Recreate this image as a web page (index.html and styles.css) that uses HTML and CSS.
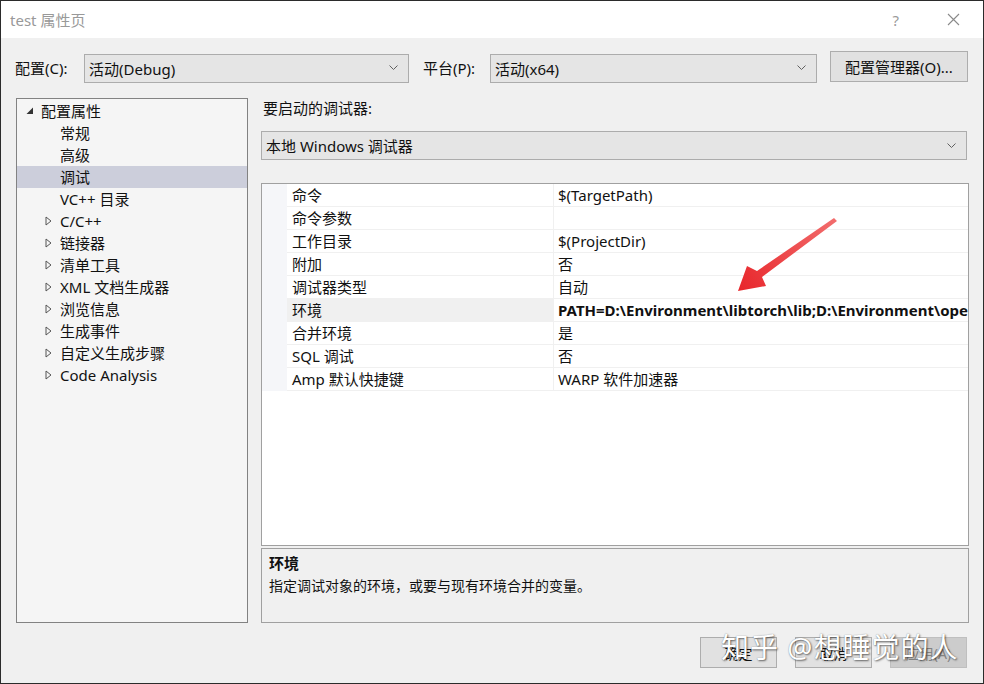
FILE: index.html
```html
<!DOCTYPE html>
<html>
  <head>
    <meta charset="utf-8">
    <title>test 属性页</title>
    <link rel="stylesheet" href="styles.css">
  </head>
  <body>
    <div class="window">
      <div class="titlebar">
        <span class="title">test 属性页</span>
        <span class="help">?</span>
        <svg class="close" width="13" height="13" viewBox="0 0 13 13"><path d="M1 1L12 12M12 1L1 12" stroke="#8a8a8a" stroke-width="1.1"/></svg>
      </div>

      <div class="toolbar">
        <span class="lbl lbl-config">配置(C):</span>
        <div class="combo combo-config">
          <span>活动(Debug)</span>
          <svg class="chev" width="9" height="6" viewBox="0 0 9 6"><path d="M0.5 0.5L4.5 4.5L8.5 0.5" fill="none" stroke="#606060"/></svg>
        </div>
        <span class="lbl lbl-platform">平台(P):</span>
        <div class="combo combo-platform">
          <span>活动(x64)</span>
          <svg class="chev" width="9" height="6" viewBox="0 0 9 6"><path d="M0.5 0.5L4.5 4.5L8.5 0.5" fill="none" stroke="#606060"/></svg>
        </div>
        <div class="btn btn-manager">配置管理器(O)...</div>
      </div>

      <div class="content">
        <div class="tree">
          <div class="node root">
            <svg class="tri" width="8" height="8" viewBox="0 0 8 8"><path d="M7 0.5V7H0.5Z" fill="#333"/></svg>
            <span>配置属性</span>
          </div>
          <div class="node leaf">常规</div>
          <div class="node leaf">高级</div>
          <div class="node leaf selected">调试</div>
          <div class="node leaf">VC++ 目录</div>
          <div class="node branch"><svg class="tri" width="8" height="10" viewBox="0 0 8 10"><path d="M1 1L6 5L1 9Z" fill="none" stroke="#555"/></svg><span>C/C++</span></div>
          <div class="node branch"><svg class="tri" width="8" height="10" viewBox="0 0 8 10"><path d="M1 1L6 5L1 9Z" fill="none" stroke="#555"/></svg><span>链接器</span></div>
          <div class="node branch"><svg class="tri" width="8" height="10" viewBox="0 0 8 10"><path d="M1 1L6 5L1 9Z" fill="none" stroke="#555"/></svg><span>清单工具</span></div>
          <div class="node branch"><svg class="tri" width="8" height="10" viewBox="0 0 8 10"><path d="M1 1L6 5L1 9Z" fill="none" stroke="#555"/></svg><span>XML 文档生成器</span></div>
          <div class="node branch"><svg class="tri" width="8" height="10" viewBox="0 0 8 10"><path d="M1 1L6 5L1 9Z" fill="none" stroke="#555"/></svg><span>浏览信息</span></div>
          <div class="node branch"><svg class="tri" width="8" height="10" viewBox="0 0 8 10"><path d="M1 1L6 5L1 9Z" fill="none" stroke="#555"/></svg><span>生成事件</span></div>
          <div class="node branch"><svg class="tri" width="8" height="10" viewBox="0 0 8 10"><path d="M1 1L6 5L1 9Z" fill="none" stroke="#555"/></svg><span>自定义生成步骤</span></div>
          <div class="node branch"><svg class="tri" width="8" height="10" viewBox="0 0 8 10"><path d="M1 1L6 5L1 9Z" fill="none" stroke="#555"/></svg><span>Code Analysis</span></div>
        </div>

        <div class="pane">
          <div class="pane-label">要启动的调试器:</div>
          <div class="combo combo-debugger">
            <span>本地 Windows 调试器</span>
            <svg class="chev" width="9" height="6" viewBox="0 0 9 6"><path d="M0.5 0.5L4.5 4.5L8.5 0.5" fill="none" stroke="#606060"/></svg>
          </div>

          <div class="grid">
            <div class="row"><div class="gutter"></div><div class="name">命令</div><div class="value">$(TargetPath)</div></div>
            <div class="row"><div class="gutter"></div><div class="name">命令参数</div><div class="value"></div></div>
            <div class="row"><div class="gutter"></div><div class="name">工作目录</div><div class="value">$(ProjectDir)</div></div>
            <div class="row"><div class="gutter"></div><div class="name">附加</div><div class="value">否</div></div>
            <div class="row"><div class="gutter"></div><div class="name">调试器类型</div><div class="value">自动</div></div>
            <div class="row active"><div class="gutter"></div><div class="name">环境</div><div class="value bold">PATH=D:\Environment\libtorch\lib;D:\Environment\opencv\build\x64\vc15\bin;%PATH%</div></div>
            <div class="row"><div class="gutter"></div><div class="name">合并环境</div><div class="value">是</div></div>
            <div class="row"><div class="gutter"></div><div class="name">SQL 调试</div><div class="value">否</div></div>
            <div class="row"><div class="gutter"></div><div class="name">Amp 默认快捷键</div><div class="value">WARP 软件加速器</div></div>
            <div class="grid-fill"><div class="gutter"></div></div>
          </div>

          <div class="desc">
            <div class="desc-title">环境</div>
            <div class="desc-text">指定调试对象的环境，或要与现有环境合并的变量。</div>
          </div>
        </div>
      </div>

      <div class="buttons">
        <div class="btn btn-ok">确定</div>
        <div class="btn btn-cancel">取消</div>
        <div class="btn btn-apply disabled">应用(A)</div>
      </div>

      <svg class="arrow" width="984" height="684" viewBox="0 0 984 684">
        <defs>
          <linearGradient id="ag" x1="835" y1="218" x2="738" y2="290" gradientUnits="userSpaceOnUse">
            <stop offset="0" stop-color="#f26d6d"/>
            <stop offset="1" stop-color="#e8262b"/>
          </linearGradient>
        </defs>
        <path d="M834 218L757 271L747 266L738 291L766 286L762 277L837 221Z" fill="url(#ag)"/>
      </svg>

      <div class="watermark">知乎 @想睡觉的人</div>
    </div>
  </body>
</html>
```

FILE: styles.css
```css
* {
  box-sizing: border-box;
}

body {
  margin: 0;
  font-family: "Noto Sans", "Noto Sans CJK SC", sans-serif;
  font-size: 15px;
  color: #111;
}

.window {
  position: relative;
  width: 984px;
  height: 684px;
  background: #f0f0f0;
  border: 1px solid #2b2b2b;
  overflow: hidden;
}

.titlebar {
  height: 37px;
  background: #fff;
  display: flex;
  align-items: center;
  padding-left: 9px;
}

.title {
  color: #999;
  flex: 1;
}

.help {
  color: #9a9a9a;
  font-size: 15px;
  margin-right: 48px;
}

.close {
  margin-right: 23px;
}

/* barra de configuracao */
.toolbar {
  display: flex;
  align-items: center;
  height: 32px;
  margin-top: 14px;
  padding-left: 14px;
}

.lbl {
  line-height: 20px;
}

.lbl-config {
  width: 69px;
}

.lbl-platform {
  width: 67px;
  margin-left: 14px;
}

.combo {
  display: flex;
  align-items: center;
  height: 29px;
  background: #e5e5e5;
  border: 1px solid #acacac;
  padding: 0 10px 0 4px;
}

.combo span {
  flex: 1;
}

.combo-config {
  width: 325px;
}

.combo-platform {
  width: 327px;
}

.btn {
  display: flex;
  align-items: center;
  justify-content: center;
  height: 31px;
  background: #e1e1e1;
  border: 1px solid #adadad;
}

.btn-manager {
  width: 138px;
  margin-left: 13px;
  margin-top: -3px;
}

.content {
  display: grid;
  grid-template-columns: 232px 708px;
  gap: 13px;
  margin-top: 14px;
  padding-left: 15px;
  height: 525px;
}

/* arvore */
.tree {
  background: #f5f5f5;
  border: 1px solid #828282;
  padding-top: 1px;
}

.node {
  height: 22px;
  line-height: 22px;
  display: flex;
  align-items: center;
  white-space: nowrap;
}

.root {
  padding-left: 9px;
}

.root .tri {
  margin-right: 7px;
}

.leaf {
  padding-left: 43px;
}

.branch {
  padding-left: 28px;
}

.branch .tri {
  margin-right: 7px;
}

.selected {
  background: #cccedb;
}

/* painel direito */
.pane {
  display: flex;
  flex-direction: column;
}

.pane-label {
  height: 20px;
  line-height: 20px;
  padding-left: 2px;
}

.combo-debugger {
  margin-top: 13px;
  width: 706px;
}

.grid {
  margin-top: 23px;
  height: 363px;
  background: #fff;
  border: 1px solid #a0a0a0;
  display: flex;
  flex-direction: column;
  overflow: hidden;
}

.row {
  display: flex;
  height: 23px;
  line-height: 22px;
}

.gutter {
  width: 25px;
  flex: none;
  background: #f5f6f9;
}

.name {
  width: 267px;
  flex: none;
  padding-left: 5px;
  border-bottom: 1px solid #f0f0f0;
  border-right: 1px solid #f0f0f0;
}

.value {
  flex: 1;
  padding-left: 4px;
  border-bottom: 1px solid #f0f0f0;
  white-space: nowrap;
  overflow: hidden;
}

.active .name {
  background: #f0f0f0;
}

.bold {
  font-weight: bold;
}

.grid-fill {
  flex: 1;
  display: flex;
}

.grid-fill .gutter {
  background: #fff;
}

.desc {
  margin-top: 2px;
  height: 75px;
  border: 1px solid #a0a0a0;
  padding: 3px 7px;
}

.desc-title {
  font-weight: bold;
  line-height: 22px;
}

.desc-text {
  line-height: 24px;
  font-size: 14px;
}

.buttons {
  display: flex;
  justify-content: flex-end;
  gap: 18px;
  margin-top: 14px;
  padding-right: 16px;
}

.buttons .btn {
  width: 77px;
  font-size: 14px;
}

.disabled {
  background: #cccccc;
  border-color: #bfbfbf;
  color: #838383;
}

.arrow {
  position: absolute;
  left: -1px;
  top: -1px;
}

.watermark {
  position: absolute;
  left: 720px;
  top: 628px;
  font-size: 28px;
  line-height: 36px;
  color: #fff;
  letter-spacing: 1px;
  text-shadow: 1px 1px 2px rgba(0, 0, 0, 0.55), 0 0 1px rgba(0, 0, 0, 0.4);
  white-space: nowrap;
}
```
